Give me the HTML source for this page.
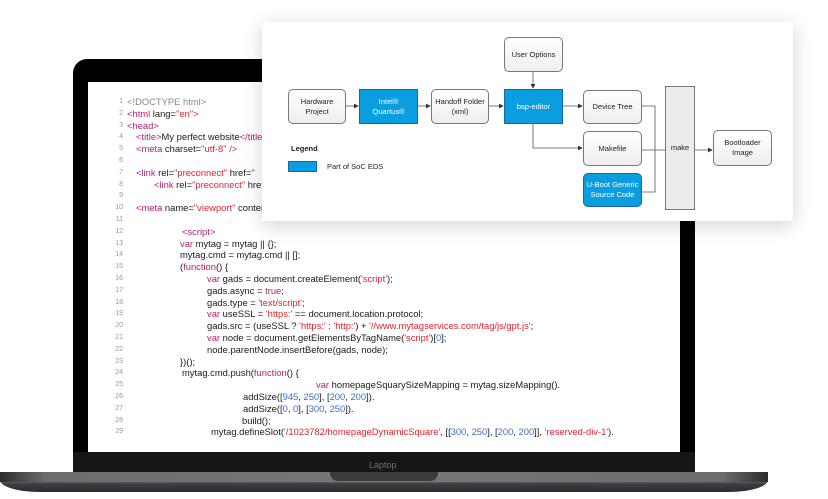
<!DOCTYPE html>
<html><head><meta charset="utf-8"><style>
*{margin:0;padding:0;box-sizing:border-box}
body{width:828px;height:499px;background:#fff;position:relative;overflow:hidden;font-family:"Liberation Sans",sans-serif}
.lid{position:absolute;left:73px;top:59px;width:622px;height:414px;background:#000;border-radius:14px 14px 0 0}
.chin{position:absolute;left:73px;top:452px;width:622px;height:20px;background:#151618}
.scr{position:absolute;left:88px;top:82px;width:592px;height:370px;background:#fff}
.base{position:absolute;left:0;top:472px;width:768px;height:20px;border-radius:0 0 40px 40px/0 0 12px 12px;background:linear-gradient(#5a5b5e,#78797c 40%,#3d3e40 60%,#2a2b2d);}
.base:before{content:"";position:absolute;left:0;top:0;width:100%;height:10px;background:linear-gradient(90deg,#2c2d2f,#6b6c6f 6%,#77787b 50%,#6b6c6f 94%,#2c2d2f)}
.notch{position:absolute;left:330px;top:472px;width:108px;height:9px;background:#3a3b3d;border-radius:0 0 8px 8px}
.lt{position:absolute;left:369px;top:460px;font-size:9px;color:#6c6d70}
.code{position:absolute;font-size:9.4px;color:#1a1a1a;white-space:pre;line-height:11.8px}
.n{position:absolute;left:111px;width:12px;text-align:right;font-size:7px;color:#999}
.k{color:#b3206e}.s{color:#e2232f}.b{color:#3a6fc0}
.panel{position:absolute;left:262px;top:22px;width:531px;height:199px;background:#fff;box-shadow:0 4px 18px rgba(0,0,0,.18)}
.bx{position:absolute;border:1px solid #777;border-radius:5px;background:linear-gradient(#fff,#eee);font-size:7.5px;color:#222;display:flex;align-items:center;justify-content:center;text-align:center;line-height:10px}
.bl{background:#0a9ee0;color:#fff;border-color:#156a9a;border-radius:0}
</style></head><body>
<div class="lid"></div>
<div class="scr"></div>
<div class="chin"></div>
<div class="base"></div>
<div class="notch"></div>
<div class="lt">Laptop</div>
<div class="code" style="top:96px;left:0">
<span class="n" style="top:0">1</span><span style="position:absolute;left:127px;top:0;color:#888">&lt;!DOCTYPE html&gt;</span>
<span class="n" style="top:11.8px">2</span><span style="position:absolute;left:127px;top:11.8px"><span class="k">&lt;html</span> lang=<span class="s">"en"</span><span class="k">&gt;</span></span>
<span class="n" style="top:23.6px">3</span><span style="position:absolute;left:127px;top:23.6px" class="k">&lt;head&gt;</span>
<span class="n" style="top:35.4px">4</span><span style="position:absolute;left:136px;top:35.4px"><span class="k">&lt;title&gt;</span>My perfect website<span class="k">&lt;/title&gt;</span></span>
<span class="n" style="top:47.2px">5</span><span style="position:absolute;left:136px;top:47.2px"><span class="k">&lt;meta</span> charset=<span class="s">"utf-8"</span> <span class="k">/&gt;</span></span>
<span class="n" style="top:59px">6</span>
<span class="n" style="top:70.8px">7</span><span style="position:absolute;left:136px;top:70.8px"><span class="k">&lt;link</span> rel=<span class="s">"preconnect"</span> href=<span class="s">"</span></span>
<span class="n" style="top:82.6px">8</span><span style="position:absolute;left:154px;top:82.6px"><span class="k">&lt;link</span> rel=<span class="s">"preconnect"</span> href</span>
<span class="n" style="top:94.4px">9</span>
<span class="n" style="top:106.2px">10</span><span style="position:absolute;left:136px;top:106.2px"><span class="k">&lt;meta</span> name=<span class="s">"viewport"</span> content</span>
<span class="n" style="top:118px">11</span>
<span class="n" style="top:129.8px">12</span><span style="position:absolute;left:182px;top:129.8px" class="k">&lt;script&gt;</span>
<span class="n" style="top:141.6px">13</span><span style="position:absolute;left:180px;top:141.6px"><span class="k">var</span> mytag = mytag || {};</span>
<span class="n" style="top:153.4px">14</span><span style="position:absolute;left:180px;top:153.4px">mytag.cmd = mytag.cmd || [];</span>
<span class="n" style="top:165.2px">15</span><span style="position:absolute;left:180px;top:165.2px">(<span class="k">function</span>() {</span>
<span class="n" style="top:177px">16</span><span style="position:absolute;left:207px;top:177px"><span class="k">var</span> gads = document.createElement(<span class="s">'script'</span>);</span>
<span class="n" style="top:188.8px">17</span><span style="position:absolute;left:207px;top:188.8px">gads.async = <span class="k">true</span>;</span>
<span class="n" style="top:200.6px">18</span><span style="position:absolute;left:207px;top:200.6px">gads.type = <span class="s">'text/script'</span>;</span>
<span class="n" style="top:212.4px">19</span><span style="position:absolute;left:207px;top:212.4px"><span class="k">var</span> useSSL = <span class="s">'https:'</span> == document.location.protocol;</span>
<span class="n" style="top:224.2px">20</span><span style="position:absolute;left:207px;top:224.2px">gads.src = (useSSL ? <span class="s">'https:'</span> : <span class="s">'http:'</span>) + <span class="s">'//www.mytagservices.com/tag/js/gpt.js'</span>;</span>
<span class="n" style="top:236px">21</span><span style="position:absolute;left:207px;top:236px"><span class="k">var</span> node = document.getElementsByTagName(<span class="s">'script'</span>)[<span class="b">0</span>];</span>
<span class="n" style="top:247.8px">22</span><span style="position:absolute;left:207px;top:247.8px">node.parentNode.insertBefore(gads, node);</span>
<span class="n" style="top:259.6px">23</span><span style="position:absolute;left:180px;top:259.6px">})();</span>
<span class="n" style="top:271.4px">24</span><span style="position:absolute;left:182px;top:271.4px">mytag.cmd.push(<span class="k">function</span>() {</span>
<span class="n" style="top:283.2px">25</span><span style="position:absolute;left:316px;top:283.2px"><span class="k">var</span> homepageSquarySizeMapping = mytag.sizeMapping().</span>
<span class="n" style="top:295px">26</span><span style="position:absolute;left:243px;top:295px">addSize([<span class="b">945</span>, <span class="b">250</span>], [<span class="b">200</span>, <span class="b">200</span>]).</span>
<span class="n" style="top:306.8px">27</span><span style="position:absolute;left:243px;top:306.8px">addSize([<span class="b">0</span>, <span class="b">0</span>], [<span class="b">300</span>, <span class="b">250</span>]).</span>
<span class="n" style="top:318.6px">28</span><span style="position:absolute;left:242px;top:318.6px">build();</span>
<span class="n" style="top:330.4px">29</span><span style="position:absolute;left:211px;top:330.4px">mytag.defineSlot(<span class="s">'/1023782/homepageDynamicSquare'</span>, [[<span class="b">300</span>, <span class="b">250</span>], [<span class="b">200</span>, <span class="b">200</span>]], <span class="s">'reserved-div-1'</span>).</span>
</div>
<div class="panel">
<svg style="position:absolute;left:0;top:0" width="531" height="199">
<defs><marker id="a" markerWidth="6" markerHeight="6" refX="5" refY="3" orient="auto"><path d="M0,0L6,3L0,6z" fill="#333"/></marker></defs>
<g stroke="#555" stroke-width="0.8" fill="none" marker-end="url(#a)">
<path d="M84,84H96"/><path d="M156,84H168"/><path d="M227,84H241"/>
<path d="M271,50V66"/><path d="M301,84H320"/><path d="M271,102V126H320"/>
<path d="M403,128H413"/><path d="M433,128H450"/>
</g>
<g stroke="#555" stroke-width="0.8" fill="none">
<path d="M380,84H393V170H380"/><path d="M380,128H403"/>
</g>
</svg>
<div class="bx" style="left:26px;top:67px;width:58px;height:35px">Hardware<br>Project</div>
<div class="bx bl" style="left:97px;top:67px;width:59px;height:35px">Intel®<br>Quartus®</div>
<div class="bx" style="left:169px;top:67px;width:58px;height:35px">Handoff Folder<br>(xml)</div>
<div class="bx bl" style="left:242px;top:67px;width:59px;height:35px">bsp-editor</div>
<div class="bx" style="left:242px;top:15px;width:59px;height:35px">User Options</div>
<div class="bx" style="left:321px;top:68px;width:59px;height:34px">Device Tree</div>
<div class="bx" style="left:321px;top:109px;width:59px;height:35px">Makefile</div>
<div class="bx bl" style="left:321px;top:151px;width:59px;height:34px;border-radius:5px">U-Boot Generic<br>Source Code</div>
<div class="bx" style="left:403px;top:64px;width:30px;height:124px;border-radius:0;background:#ececec">make</div>
<div class="bx" style="left:451px;top:108px;width:59px;height:36px">Bootloader<br>Image</div>
<div style="position:absolute;left:29px;top:122px;font-size:7.5px;font-weight:bold;color:#222">Legend</div>
<div style="position:absolute;left:26px;top:139px;width:29px;height:11px;background:#0a9ee0;border:1px solid #156a9a"></div>
<div style="position:absolute;left:65px;top:140px;font-size:7.5px;color:#222">Part of SoC EDS</div>
</div>
</body></html>
